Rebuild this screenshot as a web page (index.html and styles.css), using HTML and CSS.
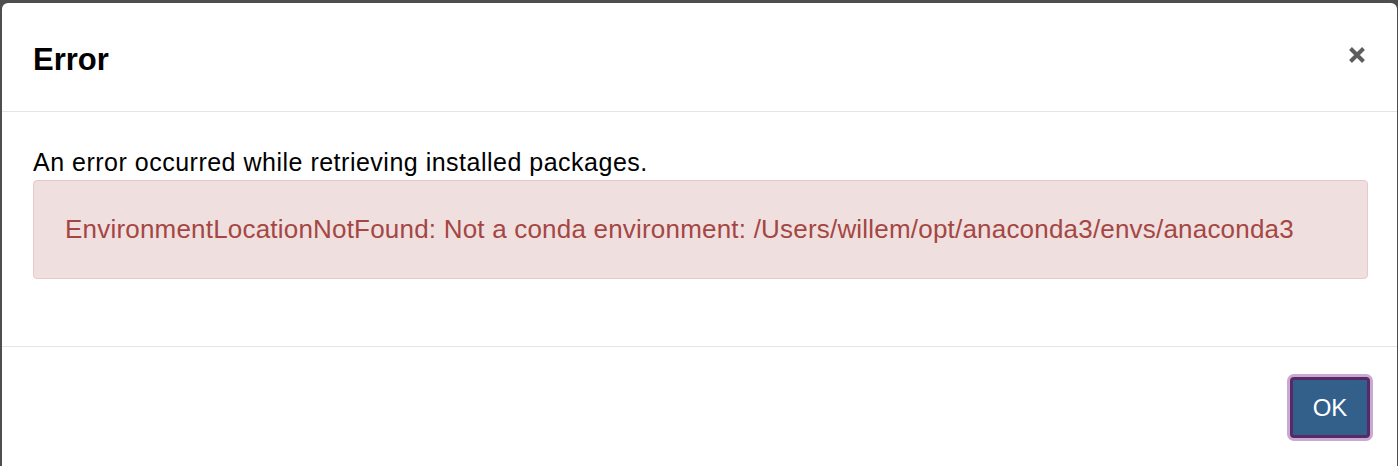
FILE: index.html
```html
<!DOCTYPE html>
<html>
<head>
<meta charset="utf-8">
<link rel="stylesheet" href="styles.css">
</head>
<body>
<div class="modal">
  <div class="modal-header">
    <h4 class="modal-title">Error</h4>
    <button class="close" type="button" aria-label="Close">
      <svg width="18" height="18" viewBox="0 0 18 18"><path d="M2.5 2.5 L15.5 15.5 M15.5 2.5 L2.5 15.5" stroke="#5e5e5e" stroke-width="4" stroke-linecap="butt"/></svg>
    </button>
  </div>
  <div class="modal-body">
    <p class="message">An error occurred while retrieving installed packages.</p>
    <div class="alert">EnvironmentLocationNotFound: Not a conda environment: /Users/willem/opt/anaconda3/envs/anaconda3</div>
  </div>
  <div class="modal-footer">
    <button class="btn-ok" type="button">OK</button>
  </div>
</div>
</body>
</html>
```

FILE: styles.css
```css
html, body {
  margin: 0;
  height: 100%;
}
body {
  background: #4e4e4e;
  padding: 3px 1px 0 2px;
  box-sizing: border-box;
  overflow: hidden;
  font-family: "Liberation Sans", Arial, Helvetica, sans-serif;
}
.modal {
  background: #fff;
  border-radius: 6px 6px 0 0;
  height: 100%;
  display: flex;
  flex-direction: column;
}
.modal-header {
  height: 109px;
  box-sizing: border-box;
  display: flex;
  align-items: center;
  justify-content: space-between;
  padding: 0 31px 0 31px;
  border-bottom: 1px solid #e5e5e5;
}
.modal-title {
  margin: 0;
  font-size: 31px;
  font-weight: bold;
  color: #000;
  line-height: 1;
  padding-top: 5px;
}
.close {
  background: none;
  border: 0;
  padding: 0;
  margin: 0 0 4px 0;
  width: 18px;
  height: 18px;
  display: block;
}
.close svg { display: block; }
.modal-body {
  height: 234px;
  box-sizing: border-box;
  padding: 36px 29px 0 31px;
}
.message {
  margin: 0 0 4px 0;
  font-size: 25px;
  letter-spacing: 0.5px;
  line-height: 28px;
  color: #000;
}
.alert {
  height: 99px;
  box-sizing: border-box;
  display: flex;
  align-items: center;
  padding: 0 31px;
  background: #f0dfdf;
  border: 1px solid #e7c9cc;
  border-radius: 4px;
  color: #a44744;
  font-size: 26px;
  letter-spacing: 0.2px;
}
.modal-footer {
  border-top: 1px solid #e5e5e5;
  display: flex;
  justify-content: flex-end;
  padding: 30px 27px 0 0;
}
.btn-ok {
  width: 80px;
  height: 61px;
  box-sizing: border-box;
  background: #335f8b;
  color: #fff;
  border: 3px solid #572a66;
  border-radius: 4px;
  box-shadow: 0 0 0 3px #c9a8d3;
  font-family: "Liberation Sans", Arial, Helvetica, sans-serif;
  font-size: 24px;
  padding: 0;
}
```
